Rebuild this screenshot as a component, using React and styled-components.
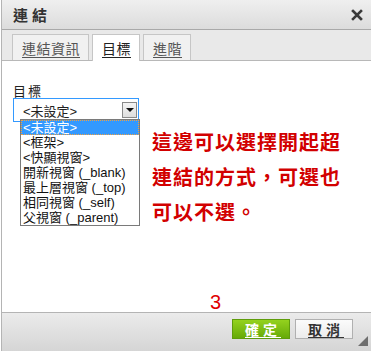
import React from 'react';
import styled, { createGlobalStyle } from 'styled-components';

const GlobalStyle = createGlobalStyle`
  html, body {
    margin: 0;
    padding: 0;
    background: #ffffff;
  }
  body {
    font-family: "Liberation Sans", "Noto Sans CJK TC", sans-serif;
    font-size: 13px;
    color: #222;
  }
`;

const Dialog = styled.div`
  width: 370px;
  height: 351px;
  margin-left: 1px;
  border-left: 1px solid #b4b4b4;
  box-sizing: border-box;
  display: flex;
  flex-direction: column;
  overflow: hidden;
`;

const TitleBar = styled.div`
  height: 29px;
  flex: none;
  display: flex;
  align-items: center;
  justify-content: space-between;
  padding: 0 6px 0 11px;
  background: linear-gradient(#efefef, #dcdcdc);
  border-bottom: 1px solid #a9a9a9;
`;

const Title = styled.span`
  font-family: "Noto Sans CJK TC", sans-serif;
  font-weight: bold;
  font-size: 15px;
  letter-spacing: 4px;
  color: #333;
`;

const CloseButton = styled.span`
  display: flex;
  width: 12px;
  height: 12px;
  margin-right: 2px;
`;

const TabStrip = styled.div`
  height: 30px;
  flex: none;
  display: flex;
  align-items: flex-end;
  gap: 3px;
  padding-left: 10px;
  background: #e9e9e9;
  border-bottom: 1px solid #b8b8b8;
`;

const Tab = styled.div`
  box-sizing: border-box;
  padding: 0 8px 0 9px;
  display: flex;
  align-items: center;
  border: 1px solid #c6c6c6;
  border-bottom: none;
  margin-bottom: ${p => (p.$active ? '-1px' : '0')};
  height: ${p => (p.$active ? '27px' : '26px')};
  background: ${p => (p.$active ? '#ffffff' : '#f1f1f1')};
  font-family: "Noto Sans CJK TC", sans-serif;
  font-size: 14px;
  letter-spacing: 0.5px;
  color: ${p => (p.$active ? '#222' : '#555')};
  text-decoration: underline;
  text-underline-offset: 3px;
`;

const Content = styled.div`
  flex: 1;
  position: relative;
  display: flex;
  flex-direction: column;
  padding: 23px 12px 0 11px;
  background: #fff;
`;

const Row = styled.div`
  display: flex;
  gap: 13px;
`;

const Field = styled.div`
  position: relative;
  width: 126px;
  flex: none;
`;

const Label = styled.div`
  font-family: "Noto Sans CJK TC", sans-serif;
  font-size: 13px;
  line-height: 14px;
  letter-spacing: 2px;
  color: #222;
`;

const Select = styled.div`
  height: 24px;
  box-sizing: border-box;
  border: 1px solid #3399ff;
  display: flex;
  align-items: center;
  justify-content: space-between;
  padding: 0 1px 0 9px;
  font-family: "Liberation Sans", "Noto Sans CJK TC", sans-serif;
  font-size: 13px;
`;

const ArrowButton = styled.span`
  width: 15px;
  height: 16px;
  box-sizing: border-box;
  border: 1px solid #8a8a8a;
  background: linear-gradient(#f4f4f4, #dedede);
  display: flex;
  align-items: center;
  justify-content: center;
`;

const Arrow = styled.span`
  width: 0;
  height: 0;
  border-left: 4px solid transparent;
  border-right: 4px solid transparent;
  border-top: 4px solid #111;
`;

const OptionList = styled.ul`
  position: absolute;
  left: 7px;
  top: 35px;
  width: 120px;
  margin: 0;
  padding: 0;
  list-style: none;
  background: #fff;
  border: 1px solid #7a7a7a;
  box-sizing: border-box;
  z-index: 2;
`;

const Option = styled.li`
  height: 15px;
  line-height: 15px;
  padding: 0 2px;
  font-family: "Liberation Sans", "Noto Sans CJK TC", sans-serif;
  font-size: 13px;
  white-space: nowrap;
  color: ${p => (p.$selected ? '#fff' : '#111')};
  background: ${p => (p.$selected ? '#3399ff' : 'transparent')};
  outline: ${p => (p.$selected ? '1px dotted #f0a040' : 'none')};
  outline-offset: -1px;
`;

const Note = styled.div`
  margin-top: 40px;
  font-family: "Noto Sans CJK TC", sans-serif;
  font-weight: bold;
  font-size: 20px;
  line-height: 35px;
  letter-spacing: 1px;
  color: #d20000;
`;

const Step = styled.div`
  margin-top: auto;
  margin-bottom: 0;
  padding-left: 197px;
  font-family: "Liberation Sans", sans-serif;
  font-size: 20px;
  line-height: 20px;
  color: #e00000;
`;

const Footer = styled.div`
  height: 39px;
  flex: none;
  box-sizing: border-box;
  position: relative;
  display: flex;
  justify-content: flex-end;
  align-items: flex-start;
  gap: 5px;
  padding: 6px 18px 0 0;
  border-top: 1px solid #b4b4b4;
  background: linear-gradient(#ebebeb, #d5d5d5);
`;

const Button = styled.button`
  width: 58px;
  height: 20px;
  box-sizing: border-box;
  padding: 0;
  display: flex;
  align-items: center;
  justify-content: center;
  font-family: "Noto Sans CJK TC", sans-serif;
  font-weight: bold;
  font-size: 14px;
  letter-spacing: 4px;
  text-indent: 4px;
  text-decoration: underline;
  text-underline-offset: 2px;
  border: 1px solid ${p => (p.$primary ? '#5f9c0c' : '#b0b0b0')};
  color: ${p => (p.$primary ? '#fff' : '#333')};
  background: ${p =>
    p.$primary
      ? 'linear-gradient(#94d21e, #66aa08)'
      : 'linear-gradient(#fbfbfb, #ececec)'};
`;

const Resize = styled.span`
  position: absolute;
  right: 3px;
  bottom: 5px;
  width: 0;
  height: 0;
  border-left: 10px solid transparent;
  border-bottom: 10px solid #6e6e6e;
`;

const options = [
  '<未設定>',
  '<框架>',
  '<快顯視窗>',
  '開新視窗 (_blank)',
  '最上層視窗 (_top)',
  '相同視窗 (_self)',
  '父視窗 (_parent)',
];

const App = () => {
  return (
    <>
      <GlobalStyle />
      <Dialog>
        <TitleBar>
          <Title>連結</Title>
          <CloseButton>
            <svg width="12" height="12" viewBox="0 0 12 12">
              <path d="M2 2 L10 10 M10 2 L2 10" stroke="#3a3a3a" strokeWidth="2.6" strokeLinecap="square" />
            </svg>
          </CloseButton>
        </TitleBar>
        <TabStrip>
          <Tab>連結資訊</Tab>
          <Tab $active>目標</Tab>
          <Tab>進階</Tab>
        </TabStrip>
        <Content>
          <Row>
            <Field>
              <Label>目標</Label>
              <Select>
                <span>&lt;未設定&gt;</span>
                <ArrowButton>
                  <Arrow />
                </ArrowButton>
              </Select>
              <OptionList>
                {options.map((opt, index) => (
                  <Option key={index} $selected={index === 0}>{opt}</Option>
                ))}
              </OptionList>
            </Field>
            <Note>
              這邊可以選擇開起超<br />
              連結的方式，可選也<br />
              可以不選。
            </Note>
          </Row>
          <Step>3</Step>
        </Content>
        <Footer>
          <Button $primary>確定</Button>
          <Button>取消</Button>
          <Resize />
        </Footer>
      </Dialog>
    </>
  );
};

export default App;
